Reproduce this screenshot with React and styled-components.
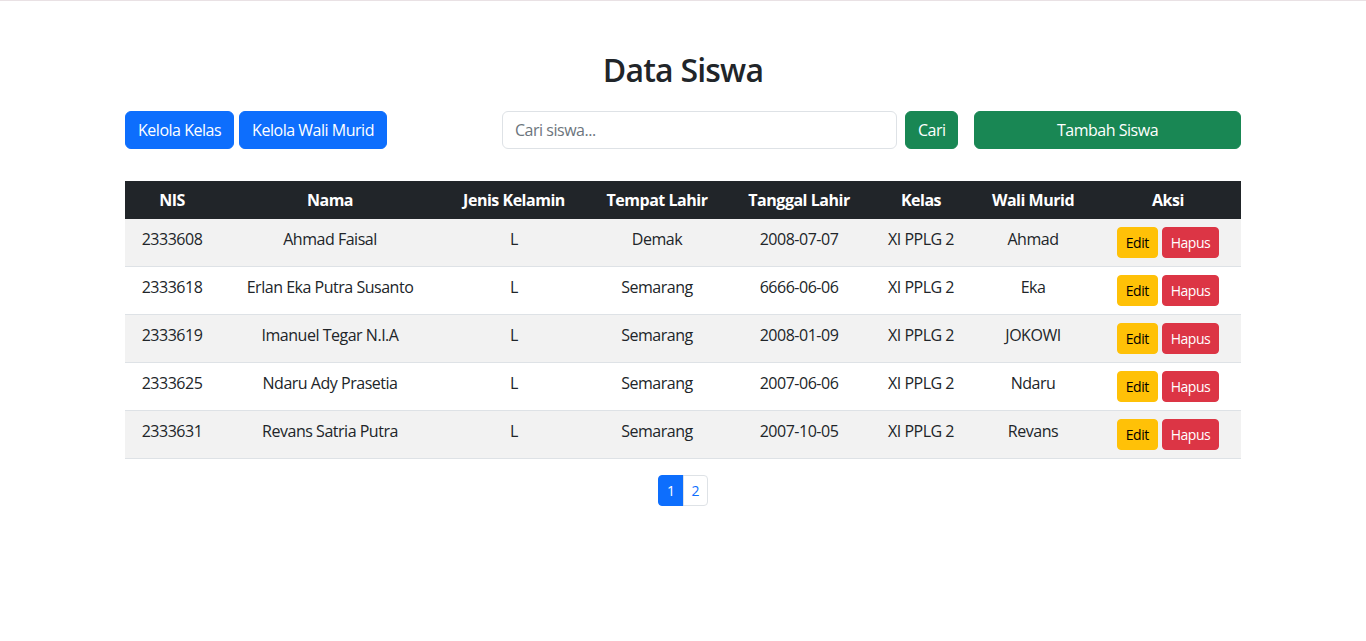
import React from 'react'
import styled, { createGlobalStyle } from 'styled-components'

const GlobalStyle = createGlobalStyle`
  * { box-sizing: border-box; }
  body {
    margin: 0;
    font-family: "Open Sans", "Noto Sans", sans-serif;
    font-size: 16px;
    line-height: 1.5;
    letter-spacing: -0.03em;
    color: #212529;
    background: #fff;
    border-top: 1px solid #e9e1e4;
  }
`

const Container = styled.div`
  width: 1116px;
  margin: 48px auto 0;
`

const Title = styled.h2`
  margin: 0 0 24px;
  padding-top: 2px;
  height: 38px;
  text-align: center;
  font-size: 32px;
  line-height: 38px;
  font-weight: 600;
  letter-spacing: -0.025em;
`

const Toolbar = styled.div`
  display: flex;
  justify-content: space-between;
  align-items: center;
  margin-bottom: 32px;
`

const Group = styled.div`
  display: flex;
  gap: ${p => p.$gap || 5}px;
  align-items: center;
`

const SearchForm = styled.form`
  display: flex;
  gap: 8px;
`

const Button = styled.button`
  font-family: inherit;
  letter-spacing: inherit;
  font-size: ${p => (p.$small ? 14 : 16)}px;
  line-height: ${p => (p.$small ? 21 : 24)}px;
  padding: ${p => (p.$small ? '4px 8px' : '6px 12px')};
  border: 1px solid ${p => p.$bg};
  background: ${p => p.$bg};
  color: ${p => p.$fg || '#fff'};
  border-radius: ${p => (p.$small ? 4 : 6)}px;
  width: ${p => (p.$w ? `${p.$w}px` : 'auto')};
  text-align: center;
  white-space: nowrap;
  cursor: pointer;
`

const SearchInput = styled.input`
  width: 395px;
  font-family: inherit;
  letter-spacing: inherit;
  font-size: 16px;
  line-height: 24px;
  padding: 6px 12px;
  border: 1px solid #dee2e6;
  border-radius: 6px;
  color: #212529;
  &::placeholder { color: #6c757d; }
`

const Table = styled.table`
  width: 100%;
  border-collapse: collapse;
  table-layout: fixed;
  text-align: center;
`

const Th = styled.th`
  background: #212529;
  color: #fff;
  font-weight: 700;
  padding: 7px 8px;
  line-height: 24px;
  white-space: nowrap;
`

const Row = styled.tr`
  background: ${p => (p.$odd ? '#f2f2f2' : '#fff')};
  border-bottom: 1px solid #dee2e6;
`

const Td = styled.td`
  padding: 8px;
  vertical-align: top;
  line-height: 24px;
  white-space: nowrap;
`

const Actions = styled.div`
  display: flex;
  justify-content: center;
  gap: 4px;
`

const Pagination = styled.ul`
  display: flex;
  justify-content: center;
  list-style: none;
  padding: 0;
  margin: 16px 0 0;
`

const PageLink = styled.a`
  display: block;
  font-size: 14px;
  line-height: 21px;
  padding: 4px 8px;
  min-width: 25px;
  text-align: center;
  text-decoration: none;
  border: 1px solid ${p => (p.$active ? '#0d6efd' : '#dee2e6')};
  background: ${p => (p.$active ? '#0d6efd' : '#fff')};
  color: ${p => (p.$active ? '#fff' : '#0d6efd')};
  border-radius: ${p => (p.$first ? '4px 0 0 4px' : '0 4px 4px 0')};
  margin-left: ${p => (p.$first ? 0 : -1)}px;
`

const columns = [
  ['NIS', 94],
  ['Nama', 222],
  ['Jenis Kelamin', 146],
  ['Tempat Lahir', 140],
  ['Tanggal Lahir', 144],
  ['Kelas', 100],
  ['Wali Murid', 124],
  ['Aksi', 146],
]

const students = [
  ['2333608', 'Ahmad Faisal', 'L', 'Demak', '2008-07-07', 'XI PPLG 2', 'Ahmad'],
  ['2333618', 'Erlan Eka Putra Susanto', 'L', 'Semarang', '6666-06-06', 'XI PPLG 2', 'Eka'],
  ['2333619', 'Imanuel Tegar N.I.A', 'L', 'Semarang', '2008-01-09', 'XI PPLG 2', 'JOKOWI'],
  ['2333625', 'Ndaru Ady Prasetia', 'L', 'Semarang', '2007-06-06', 'XI PPLG 2', 'Ndaru'],
  ['2333631', 'Revans Satria Putra', 'L', 'Semarang', '2007-10-05', 'XI PPLG 2', 'Revans'],
]

function App() {
  return (
    <>
      <GlobalStyle />
      <Container>
        <Title>Data Siswa</Title>
        <Toolbar>
          <Group>
            <Button $bg="#0d6efd">Kelola Kelas</Button>
            <Button $bg="#0d6efd">Kelola Wali Murid</Button>
          </Group>
          <Group $gap={16}>
            <SearchForm onSubmit={e => e.preventDefault()}>
              <SearchInput placeholder="Cari siswa..." />
              <Button $bg="#198754" $w={53}>Cari</Button>
            </SearchForm>
            <Button $bg="#198754" $w={267}>Tambah Siswa</Button>
          </Group>
        </Toolbar>
        <Table>
          <colgroup>
            {columns.map(([name, w]) => (
              <col key={name} style={{ width: w }} />
            ))}
          </colgroup>
          <thead>
            <tr>
              {columns.map(([name]) => (
                <Th key={name}>{name}</Th>
              ))}
            </tr>
          </thead>
          <tbody>
            {students.map((s, i) => (
              <Row key={s[0]} $odd={i % 2 === 0}>
                {s.map((v, j) => (
                  <Td key={j}>{v}</Td>
                ))}
                <Td>
                  <Actions>
                    <Button $small $bg="#ffc107" $fg="#000">Edit</Button>
                    <Button $small $bg="#dc3545">Hapus</Button>
                  </Actions>
                </Td>
              </Row>
            ))}
          </tbody>
        </Table>
        <Pagination>
          <li><PageLink href="#" $first $active>1</PageLink></li>
          <li><PageLink href="#">2</PageLink></li>
        </Pagination>
      </Container>
    </>
  )
}

export default App
